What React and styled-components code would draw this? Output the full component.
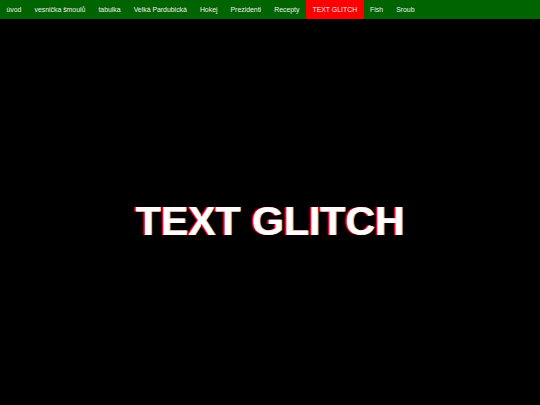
import React from 'react';
import styled, { createGlobalStyle } from 'styled-components';

const GlobalStyle = createGlobalStyle`
    html, body {
        margin: 0;
        padding: 0;
        background: #000000;
        overflow: hidden;
        font-family: "Liberation Sans", Arial, sans-serif;
    }
`

const Nav = styled.nav`
    display: flex;
    align-items: stretch;
    height: 19px;
    background: #006400;
`

const NavItem = styled.a`
    display: flex;
    align-items: center;
    padding: 0 6.5px;
    font-size: 6.9px;
    color: #eeeeee;
    text-decoration: none;
    background: ${props => (props.$active ? '#ff0000' : 'transparent')};
`

const Main = styled.main`
    height: 100vh;
    display: flex;
    align-items: center;
    justify-content: center;
`

const Glitch = styled.h1`
    margin: 0;
    font-size: 41px;
    font-weight: bold;
    color: #ffffff;
    text-shadow: -2px 0 #ff0000, 1px 0 #bbbbbb;
`

const links = [
    'úvod',
    'vesnička šmoulů',
    'tabulka',
    'Velká Pardubická',
    'Hokej',
    'Prezidenti',
    'Recepty',
    'TEXT GLITCH',
    'Fish',
    'Sroub'
]

function App() {
    return (
        <>
            <GlobalStyle />
            <Nav>
                {links.map(link => (
                    <NavItem key={link} href="#" $active={link === 'TEXT GLITCH'}>
                        {link}
                    </NavItem>
                ))}
            </Nav>
            <Main>
                <Glitch>TEXT GLITCH</Glitch>
            </Main>
        </>
    )
}

export default App;
